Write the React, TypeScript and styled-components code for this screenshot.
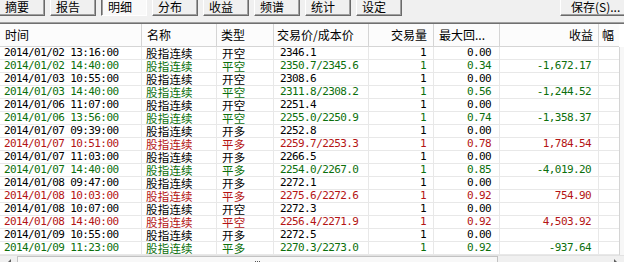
import React from 'react';
import styled, { createGlobalStyle } from 'styled-components';

const GlobalStyle = createGlobalStyle`
  html, body { margin: 0; padding: 0; background: #f0f0f0; }
  body { font-family: "Noto Sans CJK SC", "Noto Sans", sans-serif; }
`;

const CJK = `"Noto Sans CJK SC", "Noto Sans", sans-serif`;
const MONO = `"DejaVu Sans Mono", "Liberation Mono", monospace`;

const tones: Record<string, string> = {
  k: '#000000',
  g: '#0c6f0c',
  r: '#b41414',
};

const Root = styled.div`
  width: 624px;
  height: 262px;
  overflow: hidden;
  background: #f0f0f0;
  display: flex;
  flex-direction: column;
`;

const Toolbar = styled.div`
  display: flex;
  gap: 5px;
  width: 641px;
  height: 16px;
  margin-left: -1px;
  flex-shrink: 0;
`;

const ToolButton = styled.div<{ $active?: boolean; $width?: number }>`
  box-sizing: border-box;
  width: ${p => p.$width ?? 46}px;
  height: 16px;
  flex-shrink: 0;
  display: flex;
  align-items: center;
  padding: 0 0 1px ${p => (p.$active ? 6 : 5)}px;
  font-family: ${CJK};
  font-size: 12px;
  line-height: 14px;
  color: #000;
  background: ${p => (p.$active ? '#f9f9f9' : '#f0f0f0')};
  border-left: 1px solid ${p => (p.$active ? '#6a6a6a' : '#ffffff')};
  border-right: 1px solid ${p => (p.$active ? '#ffffff' : '#6a6a6a')};
  border-bottom: 1px solid ${p => (p.$active ? '#ffffff' : '#6a6a6a')};
  box-shadow: ${p => (p.$active ? 'inset 1px 0 #a0a0a0' : 'inset -1px -1px #a0a0a0')};
  white-space: nowrap;
`;

const SaveButton = styled(ToolButton)`
  margin-left: auto;
  padding-left: 10px;
`;

const Panel = styled.div`
  margin-top: 6px;
  border-top: 1px solid #a0a0a0;
  box-shadow: inset 0 1px #707070;
  padding-top: 1px;
  display: flex;
  flex-direction: column;
  background: #fff;
  flex-shrink: 0;
`;

const Body = styled.div`
  display: flex;
  height: 231px;
`;

const Table = styled.div`
  width: 619px;
  overflow: hidden;
  flex-shrink: 0;
`;

const gridCols = '142px 75px 57px 95px 65px 66px 99px 40px';

const HeaderRow = styled.div`
  display: grid;
  grid-template-columns: ${gridCols};
  width: 639px;
  height: 23px;
  box-sizing: border-box;
  background: #fcfcfc;
  border-bottom: 1px solid #d5d5d5;
`;

const HeadCell = styled.div<{ $align: string; $pad: number }>`
  box-sizing: border-box;
  border-right: 1px solid #d5d5d5;
  display: flex;
  align-items: center;
  justify-content: ${p => (p.$align === 'right' ? 'flex-end' : 'flex-start')};
  padding: 0 ${p => (p.$align === 'right' ? p.$pad : 0)}px 1px ${p => (p.$align === 'right' ? 0 : p.$pad)}px;
  font-family: ${CJK};
  font-size: 12px;
  line-height: 16px;
  color: #000;
  white-space: nowrap;
  overflow: hidden;
`;

const Row = styled.div<{ $tone: string }>`
  display: grid;
  grid-template-columns: ${gridCols};
  width: 639px;
  height: 13px;
  box-sizing: border-box;
  border-bottom: 1px solid #e8e8e8;
  color: ${p => tones[p.$tone]};
`;

const Cell = styled.div<{ $align: string; $pad: number; $mono: boolean }>`
  box-sizing: border-box;
  border-right: 1px solid #e8e8e8;
  display: flex;
  align-items: center;
  justify-content: ${p => (p.$align === 'right' ? 'flex-end' : 'flex-start')};
  padding: 0 ${p => (p.$align === 'right' ? p.$pad : 0)}px 0 ${p => (p.$align === 'right' ? 0 : p.$pad)}px;
  font-family: ${p => (p.$mono ? MONO : CJK)};
  font-size: ${p => (p.$mono ? 11 : 11.5)}px;
  letter-spacing: ${p => (p.$mono ? '-0.6px' : '0.2px')};
  line-height: 12px;
  white-space: pre;
  overflow: hidden;
`;

const VScroll = styled.div`
  width: 5px;
  margin-top: 23px;
  border-left: 1px solid #d4d4d4;
  background: #f7f7f7;
`;

const HScroll = styled.div`
  display: flex;
  height: 17px;
  background: #f0f0f0;
  border-top: 1px solid #e2e2e2;
  flex-shrink: 0;
`;

const ScrollArrow = styled.div<{ $side: 'left' | 'right' }>`
  width: 17px;
  display: flex;
  justify-content: center;
  padding-top: 3px;
  box-sizing: border-box;
  &::before {
    content: '';
    width: 0;
    height: 0;
    border-top: 4px solid transparent;
    border-bottom: 4px solid transparent;
    ${p => (p.$side === 'left' ? 'border-right: 4px solid #606060;' : 'border-left: 4px solid #606060;')}
  }
`;

const Thumb = styled.div`
  width: 481px;
  box-sizing: border-box;
  border: 1px solid #c2c2c2;
  border-bottom: none;
  background: #f8f8f8;
  display: flex;
  justify-content: center;
  padding-top: 4px;
  gap: 1px;
`;

const Grip = styled.span`
  width: 1px;
  height: 6px;
  background: #555;
`;

const Track = styled.div`
  flex: 1;
`;

type Col = { title: string; align: string; headAlign: string; hp: number; cp: number; mono: boolean };

const columns: Col[] = [
  { title: '时间', align: 'left', headAlign: 'left', hp: 5, cp: 4, mono: true },
  { title: '名称', align: 'left', headAlign: 'left', hp: 5, cp: 4, mono: false },
  { title: '类型', align: 'left', headAlign: 'left', hp: 4, cp: 5, mono: false },
  { title: '交易价/成本价', align: 'left', headAlign: 'left', hp: 3, cp: 6, mono: true },
  { title: '交易量', align: 'right', headAlign: 'right', hp: 6, cp: 7, mono: true },
  { title: '最大回...', align: 'right', headAlign: 'left', hp: 5, cp: 8, mono: true },
  { title: '收益', align: 'right', headAlign: 'right', hp: 5, cp: 7, mono: true },
  { title: '幅', align: 'left', headAlign: 'left', hp: 3, cp: 3, mono: true },
];

const trades: string[][] = [
  ['k', '2014/01/02 13:16:00', '开空', '2346.1', '0.00', ''],
  ['g', '2014/01/02 14:40:00', '平空', '2350.7/2345.6', '0.34', '-1,672.17'],
  ['k', '2014/01/03 10:55:00', '开空', '2308.6', '0.00', ''],
  ['g', '2014/01/03 14:40:00', '平空', '2311.8/2308.2', '0.56', '-1,244.52'],
  ['k', '2014/01/06 11:07:00', '开空', '2251.4', '0.00', ''],
  ['g', '2014/01/06 13:56:00', '平空', '2255.0/2250.9', '0.74', '-1,358.37'],
  ['k', '2014/01/07 09:39:00', '开多', '2252.8', '0.00', ''],
  ['r', '2014/01/07 10:51:00', '平多', '2259.7/2253.3', '0.78', '1,784.54'],
  ['k', '2014/01/07 11:03:00', '开多', '2266.5', '0.00', ''],
  ['g', '2014/01/07 14:40:00', '平多', '2254.0/2267.0', '0.85', '-4,019.20'],
  ['k', '2014/01/08 09:47:00', '开多', '2272.1', '0.00', ''],
  ['r', '2014/01/08 10:03:00', '平多', '2275.6/2272.6', '0.92', '754.90'],
  ['k', '2014/01/08 10:07:00', '开空', '2272.3', '0.00', ''],
  ['r', '2014/01/08 14:40:00', '平空', '2256.4/2271.9', '0.92', '4,503.92'],
  ['k', '2014/01/09 10:55:00', '开多', '2272.5', '0.00', ''],
  ['g', '2014/01/09 11:23:00', '平多', '2270.3/2273.0', '0.92', '-937.64'],
].map(([tone, time, type, price, dd, profit]) => [tone, time, '股指连续', type, price, '1', dd, profit, '']);

const tabs = ['摘要', '报告', '明细', '分布', '收益', '频谱', '统计', '设定'];

const App = () => (
  <>
    <GlobalStyle />
    <Root>
      <Toolbar>
        {tabs.map(t => (
          <ToolButton key={t} $active={t === '明细'}>{t}</ToolButton>
        ))}
        <SaveButton $width={80}>保存(S)...</SaveButton>
      </Toolbar>
      <Panel>
        <Body>
          <Table>
            <HeaderRow>
              {columns.map(c => (
                <HeadCell key={c.title} $align={c.headAlign} $pad={c.hp}>{c.title}</HeadCell>
              ))}
            </HeaderRow>
            {trades.map((row, i) => (
              <Row key={i} $tone={row[0]}>
                {columns.map((c, j) => (
                  <Cell key={j} $align={c.align} $pad={c.cp} $mono={c.mono}>{row[j + 1]}</Cell>
                ))}
              </Row>
            ))}
          </Table>
          <VScroll />
        </Body>
        <HScroll>
          <ScrollArrow $side="left" />
          <Thumb><Grip /><Grip /><Grip /></Thumb>
          <Track />
          <ScrollArrow $side="right" />
        </HScroll>
      </Panel>
    </Root>
  </>
);

export default App;
